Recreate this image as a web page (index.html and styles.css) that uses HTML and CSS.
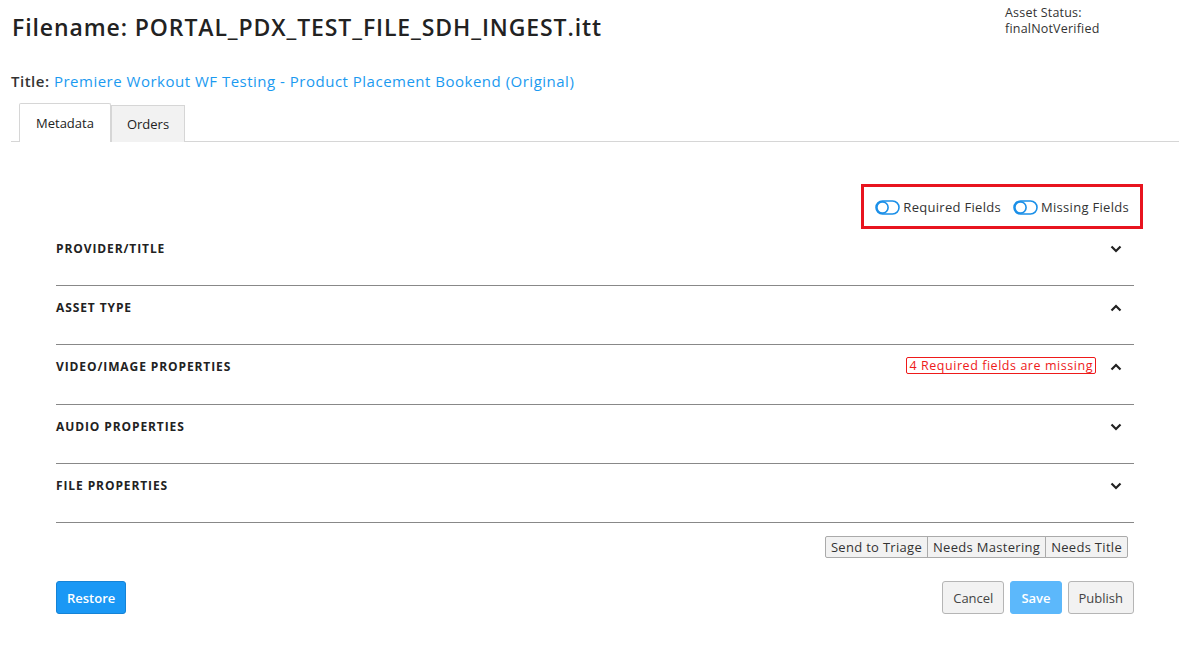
FILE: index.html
```html
<html>
	<head>
		<title>Asset Detail</title>
		<link rel="stylesheet" href="styles.css">
	</head>
	<body>
		<div class="Page">
			<div class="HeaderRow">
				<h1 class="FileName">Filename: PORTAL_PDX_TEST_FILE_SDH_INGEST.itt</h1>
				<div class="AssetStatus">Asset Status:<br>finalNotVerified</div>
			</div>

			<div class="TitleLine"><b>Title:</b> <a href="#">Premiere Workout WF Testing - Product Placement Bookend (Original)</a></div>

			<div class="TabBar">
				<div class="Tab Active">Metadata</div>
				<div class="Tab">Orders</div>
			</div>

			<div class="Panel">
				<div class="FilterRow">
					<div class="FilterBox">
						<label class="Toggle">
							<svg width="25" height="15" viewBox="0 0 25 15"><rect x="1" y="1" width="23" height="13" rx="6.5" fill="none" stroke="#1a8fe8" stroke-width="1.6"/><circle cx="7.5" cy="7.5" r="5.6" fill="none" stroke="#1a8fe8" stroke-width="1.6"/></svg>
							Required Fields
						</label>
						<label class="Toggle">
							<svg width="25" height="15" viewBox="0 0 25 15"><rect x="1" y="1" width="23" height="13" rx="6.5" fill="none" stroke="#1a8fe8" stroke-width="1.6"/><circle cx="7.5" cy="7.5" r="5.6" fill="none" stroke="#1a8fe8" stroke-width="1.6"/></svg>
							Missing Fields
						</label>
					</div>
				</div>

				<div class="Section">
					<span class="SectionName">PROVIDER/TITLE</span>
					<span class="Chevron"><svg width="12" height="8" viewBox="0 0 12 8"><path d="M1.5 1.5 L6 6 L10.5 1.5" fill="none" stroke="#222" stroke-width="2.2"/></svg></span>
				</div>
				<div class="Section">
					<span class="SectionName">ASSET TYPE</span>
					<span class="Chevron"><svg width="12" height="8" viewBox="0 0 12 8"><path d="M1.5 6.5 L6 2 L10.5 6.5" fill="none" stroke="#222" stroke-width="2.2"/></svg></span>
				</div>
				<div class="Section Tall">
					<span class="SectionName">VIDEO/IMAGE PROPERTIES</span>
					<span class="MissingBadge">4 Required fields are missing</span>
					<span class="Chevron"><svg width="12" height="8" viewBox="0 0 12 8"><path d="M1.5 6.5 L6 2 L10.5 6.5" fill="none" stroke="#222" stroke-width="2.2"/></svg></span>
				</div>
				<div class="Section">
					<span class="SectionName">AUDIO PROPERTIES</span>
					<span class="Chevron"><svg width="12" height="8" viewBox="0 0 12 8"><path d="M1.5 1.5 L6 6 L10.5 1.5" fill="none" stroke="#222" stroke-width="2.2"/></svg></span>
				</div>
				<div class="Section">
					<span class="SectionName">FILE PROPERTIES</span>
					<span class="Chevron"><svg width="12" height="8" viewBox="0 0 12 8"><path d="M1.5 1.5 L6 6 L10.5 1.5" fill="none" stroke="#222" stroke-width="2.2"/></svg></span>
				</div>

				<div class="FlagRow">
					<div class="BtnGroup">
						<button>Send to Triage</button><button>Needs Mastering</button><button>Needs Title</button>
					</div>
				</div>

				<div class="ActionRow">
					<button class="Btn Primary">Restore</button>
					<div class="RightActions">
						<button class="Btn">Cancel</button>
						<button class="Btn Save">Save</button>
						<button class="Btn">Publish</button>
					</div>
				</div>
			</div>
		</div>
	</body>
</html>
```

FILE: styles.css
```css
/**************************************************************************/
/* Page */
/**************************************************************************/

body {
	margin: 0;
	background-color: white;
	font-family: "Open Sans", "DejaVu Sans", sans-serif;
	color: #222;
}

.Page {
	padding: 0 5px 0 11px;
}

.HeaderRow {
	display: flex;
	justify-content: space-between;
}

.FileName {
	margin: 11px 0 0 1px;
	font-size: 23px;
	font-weight: 600;
	letter-spacing: 0.9px;
	color: #222;
}

.AssetStatus {
	width: 174px;
	padding-top: 5px;
	font-size: 12.5px;
	line-height: 15.5px;
	letter-spacing: 0.2px;
	color: #333;
}

.TitleLine {
	margin-top: 28px;
	font-size: 15px;
	letter-spacing: 0.5px;
	color: #333;
}

.TitleLine b {
	font-weight: 600;
}

.TitleLine a {
	color: #1b9af0;
	text-decoration: none;
}

/**************************************************************************/
/* Tabs */
/**************************************************************************/

.TabBar {
	display: flex;
	align-items: flex-end;
	margin-top: 12px;
	padding-left: 8px;
	border-bottom: 1px solid #d6d6d6;
}

.Tab {
	padding: 0 15px;
	height: 36px;
	line-height: 36px;
	font-size: 13px;
	background-color: #f2f2f2;
	border: 1px solid #d6d6d6;
	border-bottom: none;
	margin-bottom: -1px;
}

.Tab.Active {
	height: 38px;
	line-height: 38px;
	padding: 0 16px;
	background-color: white;
	border-color: #d6d6d6;
	border-radius: 2px 2px 0 0;
}

/**************************************************************************/
/* Panel */
/**************************************************************************/

.Panel {
	padding: 42px 45px 0 45px;
}

.FilterRow {
	display: flex;
	justify-content: flex-end;
	margin-right: -9px;
	margin-bottom: -2px;
}

.FilterBox {
	display: flex;
	gap: 12px;
	border: 3px solid #e8141f;
	padding: 11px 11px 10px 11px;
}

.Toggle {
	display: flex;
	align-items: center;
	gap: 3px;
	font-size: 13px;
	letter-spacing: 0.3px;
	color: #333;
}

.Section {
	display: flex;
	align-items: flex-start;
	height: 44px;
	padding-top: 14px;
	line-height: 16px;
	border-bottom: 1px solid #888;
	font-size: 12px;
	font-weight: 700;
	letter-spacing: 0.9px;
}

.Section.Tall {
	height: 45px;
}

.SectionName {
	flex: 1;
}

.Chevron {
	width: 16px;
	height: 16px;
	margin-right: 8px;
	display: flex;
	align-items: center;
}

.MissingBadge {
	font-weight: 400;
	font-size: 12.5px;
	line-height: 15px;
	letter-spacing: 0.55px;
	color: #ee1a1a;
	border: 1px solid #ee1a1a;
	border-radius: 2px;
	padding: 0 2px;
	margin-right: 14px;
	margin-top: -2px;
}

/**************************************************************************/
/* Buttons */
/**************************************************************************/

.FlagRow {
	display: flex;
	justify-content: flex-end;
	padding: 13px 6px 0 0;
}

.BtnGroup {
	display: flex;
}

.BtnGroup button {
	font-family: inherit;
	font-size: 13px;
	letter-spacing: 0.3px;
	color: #333;
	background-color: #f2f2f2;
	border: 1px solid #aaa;
	height: 22px;
	padding: 0 5px;
	margin-left: -1px;
}

.BtnGroup button:first-child {
	border-radius: 2px 0 0 2px;
}

.BtnGroup button:last-child {
	border-radius: 0 2px 2px 0;
}

.ActionRow {
	display: flex;
	justify-content: space-between;
	margin-top: 23px;
}

.RightActions {
	display: flex;
	gap: 6px;
}

.Btn {
	font-family: inherit;
	font-size: 13px;
	height: 33px;
	padding: 0 10px;
	color: #444;
	background-color: #f2f2f2;
	border: 1px solid #b5b5b5;
	border-radius: 3px;
}

.Btn.Primary {
	color: white;
	font-weight: 600;
	background-color: #1a98f5;
	border-color: #1583d6;
}

.Btn.Save {
	color: white;
	font-weight: 600;
	background-color: #5cb8fb;
	border-color: #5cb8fb;
}
```
